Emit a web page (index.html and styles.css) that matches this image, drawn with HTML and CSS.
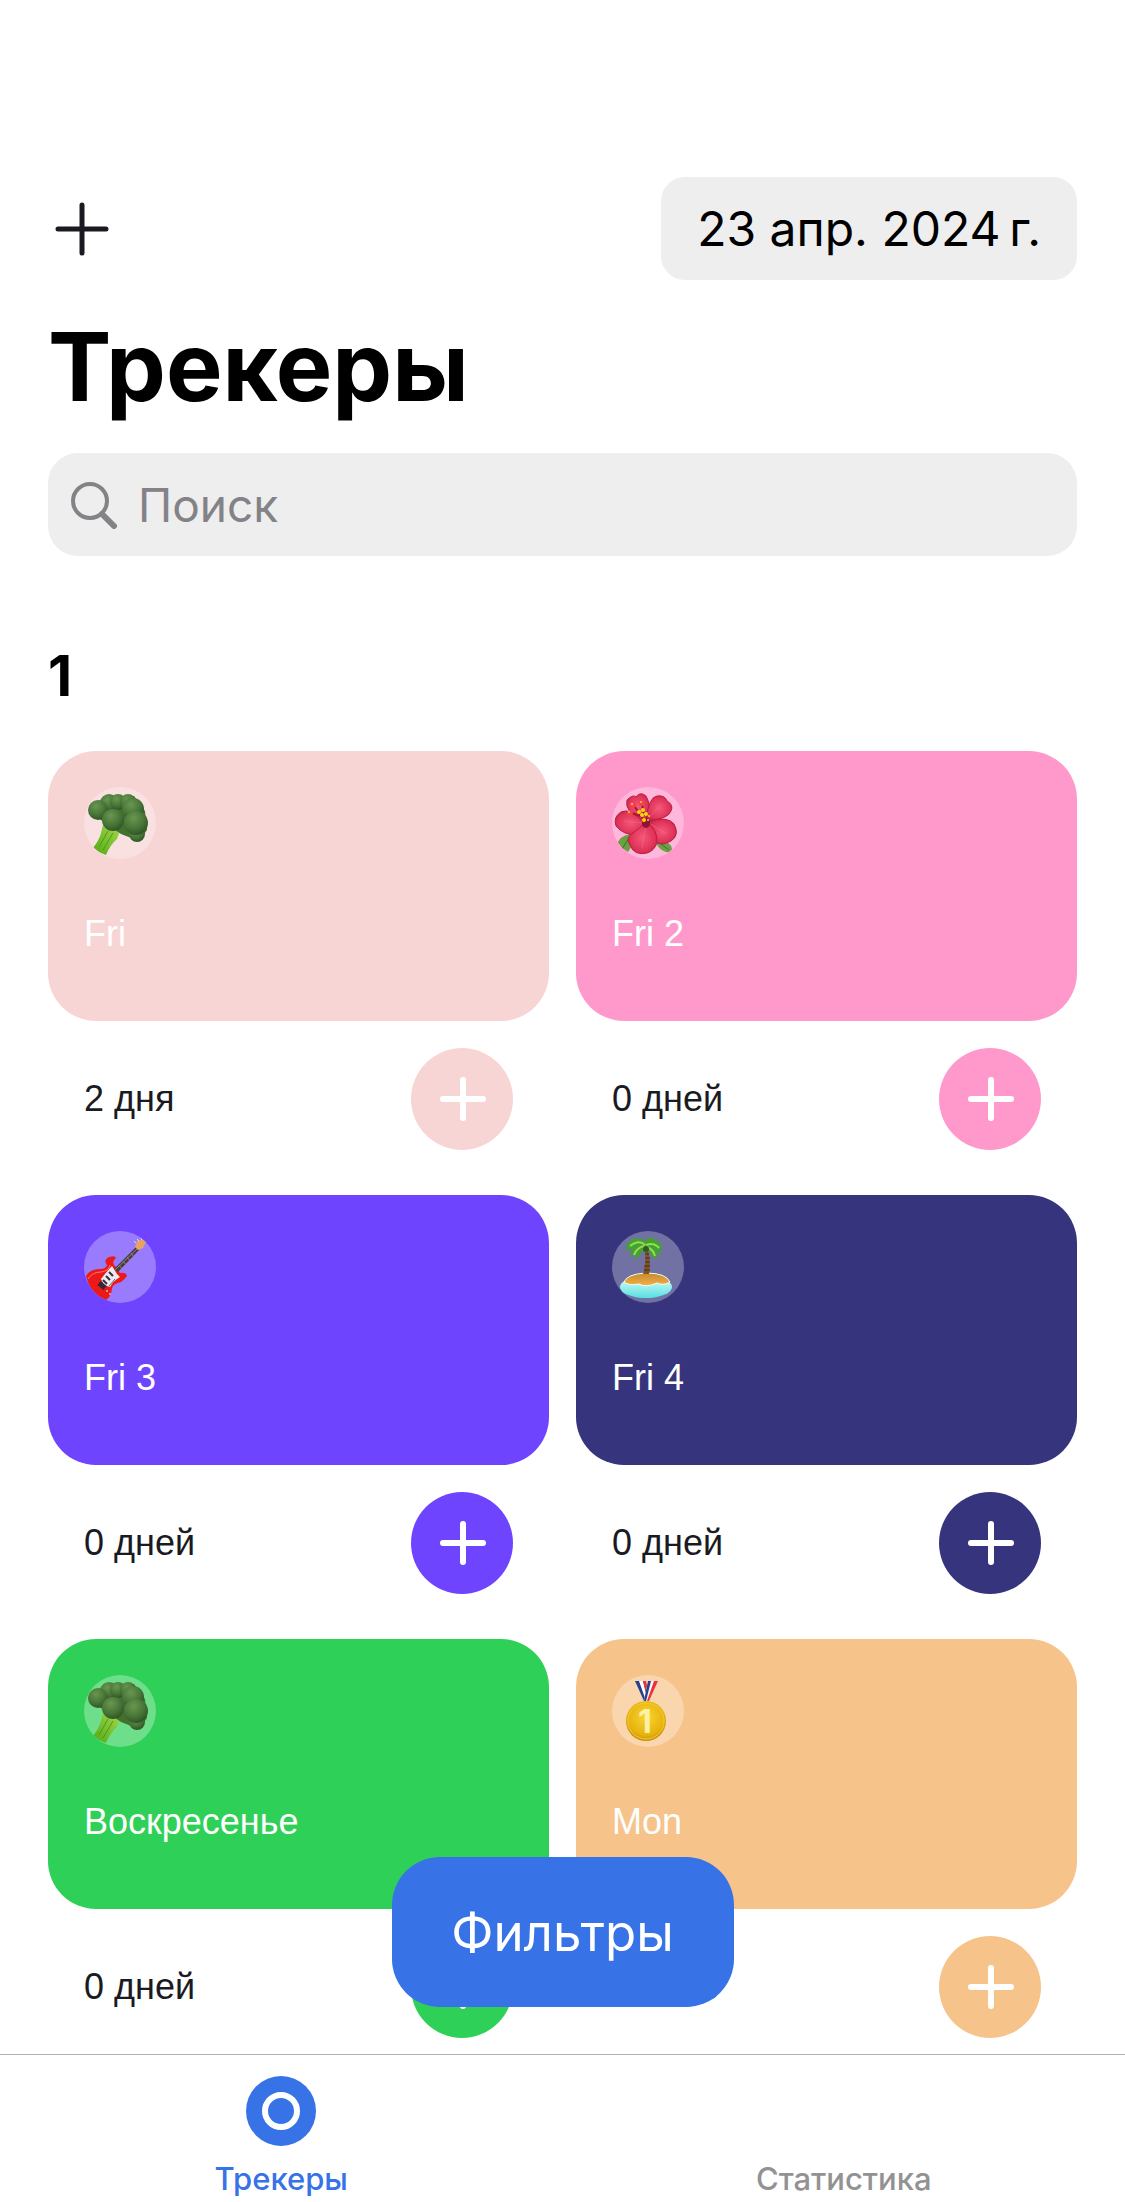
FILE: index.html
```html
<!DOCTYPE html>
<html lang="ru">
<head>
<meta charset="utf-8">
<meta name="viewport" content="width=device-width, initial-scale=1">
<title>Трекеры</title>
<link rel="stylesheet" href="styles.css">
</head>
<body>
<svg class="sprite" aria-hidden="true">
  <defs>
    <linearGradient id="stem" x1="1" y1="0" x2="0" y2="1"><stop offset="0" stop-color="#a5d84c"/><stop offset="1" stop-color="#4fa812"/></linearGradient>
    <radialGradient id="floret" cx=".4" cy=".3" r=".7"><stop offset="0" stop-color="#6a9650"/><stop offset=".6" stop-color="#497739"/><stop offset="1" stop-color="#315626"/></radialGradient>
    <radialGradient id="petal" cx=".5" cy=".5" r=".6"><stop offset="0" stop-color="#f4587a"/><stop offset=".7" stop-color="#e03358"/><stop offset="1" stop-color="#bd1f45"/></radialGradient>
    <linearGradient id="sand" x1="0" y1="0" x2="0" y2="1"><stop offset="0" stop-color="#c48a2c"/><stop offset="1" stop-color="#f2b04a"/></linearGradient>
    <linearGradient id="sea" x1="0" y1="0" x2="0" y2="1"><stop offset="0" stop-color="#e0fff8"/><stop offset="1" stop-color="#57e0e2"/></linearGradient>
    <radialGradient id="gold" cx=".5" cy=".4" r=".6"><stop offset="0" stop-color="#f8d535"/><stop offset=".75" stop-color="#e8b30c"/><stop offset="1" stop-color="#c88d06"/></radialGradient>
    <clipPath id="round"><circle cx="36" cy="36" r="36"/></clipPath>
  </defs>
  <symbol id="broccoli" viewBox="0 0 72 72">
    <g clip-path="url(#round)">
      <path d="M19 38 36 44 33 52Q26 58 22 68L8 62Q15 54 17 46Z" fill="url(#stem)"/>
      <path d="M24 44 15 60M29 46 19 63" stroke="#4e9a1c" stroke-width="1" fill="none"/>
      <path d="M12 18 20 9 50 9 61 24 63 43 55 54 37 47 14 31Z" fill="#41702f"/>
      <g fill="url(#floret)">
        <circle cx="25" cy="16" r="9"/><circle cx="34" cy="15" r="8"/><circle cx="44" cy="15" r="8"/>
        <circle cx="14" cy="23" r="10"/><circle cx="49" cy="22" r="11"/><circle cx="53" cy="47" r="8"/>
        <circle cx="52" cy="36" r="12"/><circle cx="29" cy="33" r="11"/>
      </g>
    </g>
  </symbol>
  <symbol id="hibiscus" viewBox="0 0 72 72">
    <g clip-path="url(#round)">
      <path d="M18 47Q7 49 5 58L16 65 23 54ZM44 54Q46 65 60 66 61 57 53 54Z" fill="#6d9f45"/>
      <path d="M17 51 10 62M49 57 57 63" stroke="#416f2b" stroke-width="1"/>
      <g fill="url(#petal)" stroke="#b52145" stroke-width="1">
        <path d="M31 33Q12 25 15 13 21 7 24 10 28 4 34 9 39 17 37 32Z"/>
        <path d="M34 32Q37 10 45 9 53 8 55 14 62 18 59 24 56 32 36 34Z"/>
        <path d="M34 38Q18 20 9 25 1 30 4 39 11 48 25 48Z"/>
        <path d="M36 34Q56 29 62 37 68 48 59 54 47 61 42 52Z"/>
        <path d="M35 35Q46 43 45 56 42 64 35 66 22 69 18 58 13 51 21 46Z"/>
      </g>
      <path d="M33 34 28 18M33 36 12 34M34 38 30 61M37 36 55 47M37 31 49 17" stroke="#f2718d" stroke-width="1" opacity=".5"/>
      <path d="M34 37Q29 27 22 19M31 30 20 26M32 29 30 17" stroke="#a8143a" stroke-width="2" fill="none"/>
      <ellipse cx="34" cy="36" rx="4" ry="5" fill="#8d1434"/>
      <g fill="#ffd80a"><circle cx="27" cy="25" r="2"/><circle cx="31" cy="23" r="2"/><circle cx="30" cy="28" r="2"/><circle cx="34" cy="27" r="2"/><circle cx="32" cy="33" r="2"/><circle cx="37" cy="29" r="1"/><circle cx="36" cy="33" r="1"/></g>
      <g fill="#f0453f"><circle cx="21" cy="18" r="3"/><circle cx="30" cy="16" r="3"/><circle cx="18" cy="26" r="3"/></g>
      <g fill="#ffb5a4"><circle cx="20" cy="17" r="1"/><circle cx="29" cy="15" r="1"/><circle cx="17" cy="25" r="1"/></g>
    </g>
  </symbol>
  <symbol id="guitar" viewBox="0 0 72 72">
    <g clip-path="url(#round)">
      <path d="M2 45Q6 38 16 38 22 38 23 34 19 29 25 26 31 24 32 27 27 31 31 35L36 42Q42 41 43 45 40 49 37 51 28 53 28 58 27 66 22 69L10 70Z" fill="#ed1919"/>
      <path d="M4 48Q8 41 17 41 25 40 26 34" stroke="#ff7770" stroke-width="1" fill="none"/>
      <path d="M17 48Q24 39 28 35L33 43 36 46Q29 50 26 56L20 54Z" fill="#ececf2"/>
      <path d="M30 38 52 16 55 19 34 41Z" fill="#4a3b3c"/>
      <path d="M31 39 54 17M35 34 38 38M39 30 42 34M43 26 46 30M47 22 50 26" stroke="#8f8584" stroke-width="1"/>
      <path d="M51 16 53 10 61 8 62 11 59 17 54 19Z" fill="#e7a362"/>
      <path d="M52 12 50 10M55 10 53 8M58 9 57 7" stroke="#ddd" stroke-width="1"/>
      <path d="M22 45 26 49M25 41 29 45M19 49 23 53" stroke="#363039" stroke-width="2"/>
      <path d="M15 52 21 57" stroke="#302b33" stroke-width="5"/>
      <path d="M31 48 25 55" stroke="#635966" stroke-width="1"/>
      <circle cx="23" cy="60" r="1" fill="#bbb"/><circle cx="26" cy="63" r="1" fill="#bbb"/>
    </g>
  </symbol>
  <symbol id="island" viewBox="0 0 72 72">
    <g clip-path="url(#round)">
      <ellipse cx="34" cy="56" rx="26" ry="11" fill="url(#sea)"/>
      <path d="M12 51Q15 43 34 42 54 42 58 51 52 55 45 52 34 57 27 53 17 55 12 51Z" fill="url(#sand)" stroke="#efffef" stroke-width="1"/>
      <path d="M33 18 36 18Q39 31 37 43L31 43Q35 31 33 18Z" fill="#805226"/>
      <path d="M33 23h4M33 27h5M33 31h5M32 35h6M32 39h6" stroke="#4b2e15" stroke-width="1"/>
      <path d="M33 10Q24 4 18 10 13 13 15 20L20 17 18 26 24 21 23 29Q29 25 30 20L34 21 37 20Q39 27 45 28L43 21 49 26 47 18 50 19Q50 11 44 9 37 4 33 10Z" fill="#43a330"/>
      <path d="M33 14Q27 8 18 15M33 15Q25 16 22 24M34 14Q42 11 47 17M35 16Q41 18 43 25" stroke="#98d956" stroke-width="2" fill="none"/>
      <circle cx="34" cy="18" r="3" fill="#315c20"/>
    </g>
  </symbol>
  <symbol id="plus" viewBox="0 0 48 48"><path d="M25 5V43M5 24H45" fill="none" stroke="currentColor" stroke-width="6" stroke-linecap="round"/></symbol>
</svg>

<div class="app">
  <main class="content">
    <header class="toolbar">
      <button class="add" type="button" aria-label="Добавить трекер">
        <svg viewBox="0 0 54 54" aria-hidden="true"><path d="M27 3V51M3 27H51" fill="none" stroke="#1a1b22" stroke-width="5" stroke-linecap="round"/></svg>
      </button>
      <button class="date" type="button">23 апр. 2024&#8201;г.</button>
    </header>
    <h1 class="title">Трекеры</h1>
    <label class="search">
      <svg class="search-icon" viewBox="0 0 48 48" aria-hidden="true"><g fill="none" stroke="#838387" stroke-width="4"><circle cx="20" cy="20" r="17"/><path d="M32 33 44 45" stroke-width="6" stroke-linecap="round"/></g></svg>
      <input class="search-field" type="search" placeholder="Поиск" aria-label="Поиск">
    </label>

    <section>
      <h2 class="category">1</h2>
      <div class="grid">
        <article class="tracker blush">
          <div class="card"><svg class="emoji" aria-hidden="true"><use href="#broccoli"/></svg><h3 class="name">Fri</h3></div>
          <div class="progress"><span>2 дня</span><button class="mark" type="button" aria-label="Отметить"><svg><use href="#plus"/></svg></button></div>
        </article>
        <article class="tracker pink">
          <div class="card"><svg class="emoji" aria-hidden="true"><use href="#hibiscus"/></svg><h3 class="name">Fri 2</h3></div>
          <div class="progress"><span>0 дней</span><button class="mark" type="button" aria-label="Отметить"><svg><use href="#plus"/></svg></button></div>
        </article>
        <article class="tracker violet">
          <div class="card"><svg class="emoji" aria-hidden="true"><use href="#guitar"/></svg><h3 class="name">Fri 3</h3></div>
          <div class="progress"><span>0 дней</span><button class="mark" type="button" aria-label="Отметить"><svg><use href="#plus"/></svg></button></div>
        </article>
        <article class="tracker navy">
          <div class="card"><svg class="emoji" aria-hidden="true"><use href="#island"/></svg><h3 class="name">Fri 4</h3></div>
          <div class="progress"><span>0 дней</span><button class="mark" type="button" aria-label="Отметить"><svg><use href="#plus"/></svg></button></div>
        </article>
        <article class="tracker green">
          <div class="card"><svg class="emoji" aria-hidden="true"><use href="#broccoli"/></svg><h3 class="name">Воскресенье</h3></div>
          <div class="progress"><span>0 дней</span><button class="mark" type="button" aria-label="Отметить"><svg><use href="#plus"/></svg></button></div>
        </article>
        <article class="tracker peach">
          <div class="card">
            <svg class="emoji" viewBox="0 0 72 72" aria-hidden="true">
              <path d="M23 6H33L37 26H32Z" fill="#25418d"/>
              <path d="M27 6H31L36 26H34Z" fill="#fff"/>
              <path d="M31 6H34L37 20 36 26Z" fill="#ef3038"/>
              <path d="M36 6H46L37 26H32Z" fill="#f3f4f8"/>
              <path d="M36 6H39L34 26H32Z" fill="#25418d"/>
              <path d="M42 6H46L37 26H35Z" fill="#ef3038"/>
              <circle cx="34" cy="46" r="20" fill="url(#gold)"/>
              <circle cx="34" cy="46" r="18" fill="none" stroke="#efcb3c" stroke-width="1"/>
              <text x="33" y="58" text-anchor="middle" class="medal-digit">1</text>
            </svg>
            <h3 class="name">Mon</h3>
          </div>
          <div class="progress"><span>0 days</span><button class="mark" type="button" aria-label="Отметить"><svg><use href="#plus"/></svg></button></div>
        </article>
      </div>
    </section>
    <button class="filters" type="button">Фильтры</button>
  </main>

  <nav class="tabs">
    <a class="tab active" href="#trackers" aria-current="page">
      <svg class="tab-icon" viewBox="0 0 70 70" aria-hidden="true"><circle cx="35" cy="35" r="35" fill="#3772e7"/><circle cx="35" cy="35" r="16" fill="none" stroke="#fff" stroke-width="6"/></svg>
      <span>Трекеры</span>
    </a>
    <a class="tab" href="#statistics"><span>Статистика</span></a>
  </nav>
</div>
</body>
</html>
```
FILE: styles.css
```css
* { box-sizing: border-box; }

body {
  margin: 0;
  background: #fff;
  color: #000;
  font-family: Inter, "Liberation Sans", sans-serif;
}

button { padding: 0; border: 0; font: inherit; cursor: pointer; }
h1, h2, h3 { margin: 0; }

.sprite { position: absolute; width: 0; height: 0; }

.app { display: flex; flex-direction: column; min-height: 100vh; }

.content { position: relative; flex: 1; padding: 177px 48px 16px; }

.toolbar { display: flex; align-items: center; justify-content: space-between; }

.add { width: 68px; height: 68px; padding: 7px; background: none; }
.add svg { display: block; width: 54px; height: 54px; }

.date {
  height: 103px;
  padding: 0 36px;
  border-radius: 24px;
  background: #eee;
  color: #000;
  font-size: 48px;
}

.title { margin: 29px 0 28px; font-size: 95px; line-height: 116px; }

.search {
  display: flex;
  align-items: center;
  gap: 20px;
  height: 103px;
  padding: 0 22px;
  border-radius: 30px;
  background: #eee;
}
.search-icon { width: 48px; height: 48px; flex: none; }
.search-field {
  flex: 1;
  min-width: 0;
  padding: 0;
  border: 0;
  outline: 0;
  background: none;
  color: #000;
  font: 46px Inter, "Liberation Sans", sans-serif;
}
.search-field::placeholder { color: #838387; opacity: 1; }

.category { margin: 87px 0 42px; font-size: 56px; line-height: 66px; }

.grid { display: grid; grid-template-columns: 1fr 1fr; gap: 45px 27px; }

.tracker { color: #1a1b22; font: 36px "Liberation Sans", Arial, sans-serif; }

.card {
  display: flex;
  flex-direction: column;
  gap: 24px;
  padding: 36px;
  border-radius: 48px;
  background: var(--tint);
}
.emoji { width: 72px; height: 72px; border-radius: 50%; background: rgba(255, 255, 255, .3); }
.medal-digit { font: bold 32px Inter, sans-serif; fill: #fff0a3; }
.name { display: flex; align-items: center; min-height: 102px; color: #fff; font-size: 36px; font-weight: 400; }

.progress { display: flex; align-items: center; justify-content: space-between; padding: 27px 36px 0; }
.mark {
  display: grid;
  place-items: center;
  width: 102px;
  height: 102px;
  border-radius: 50%;
  background: var(--tint);
  color: #fff;
}
.mark svg { width: 48px; height: 48px; }

.blush { --tint: #f8d5d5; }
.pink { --tint: #ff99cc; }
.violet { --tint: #6e44fe; }
.navy { --tint: #35347c; }
.green { --tint: #2fd058; }
.peach { --tint: #f6c48b; }

/* Floats over the list, centred above the tab bar */
.filters {
  position: absolute;
  bottom: 47px;
  left: 50%;
  width: 342px;
  height: 150px;
  border-radius: 48px;
  background: #3772e7;
  color: #fff;
  font-size: 51px;
  transform: translateX(-50%);
}

.tabs { display: grid; grid-template-columns: 1fr 1fr; height: 148px; border-top: 1px solid #b2b2b2; }
.tab {
  display: flex;
  flex-direction: column;
  align-items: center;
  justify-content: flex-end;
  gap: 15px;
  padding-bottom: 5px;
  color: #929292;
  font-size: 31px;
  font-weight: 500;
  line-height: 36px;
  text-decoration: none;
}
.tab.active { color: #3772e7; }
.tab-icon { width: 70px; height: 70px; }
```
